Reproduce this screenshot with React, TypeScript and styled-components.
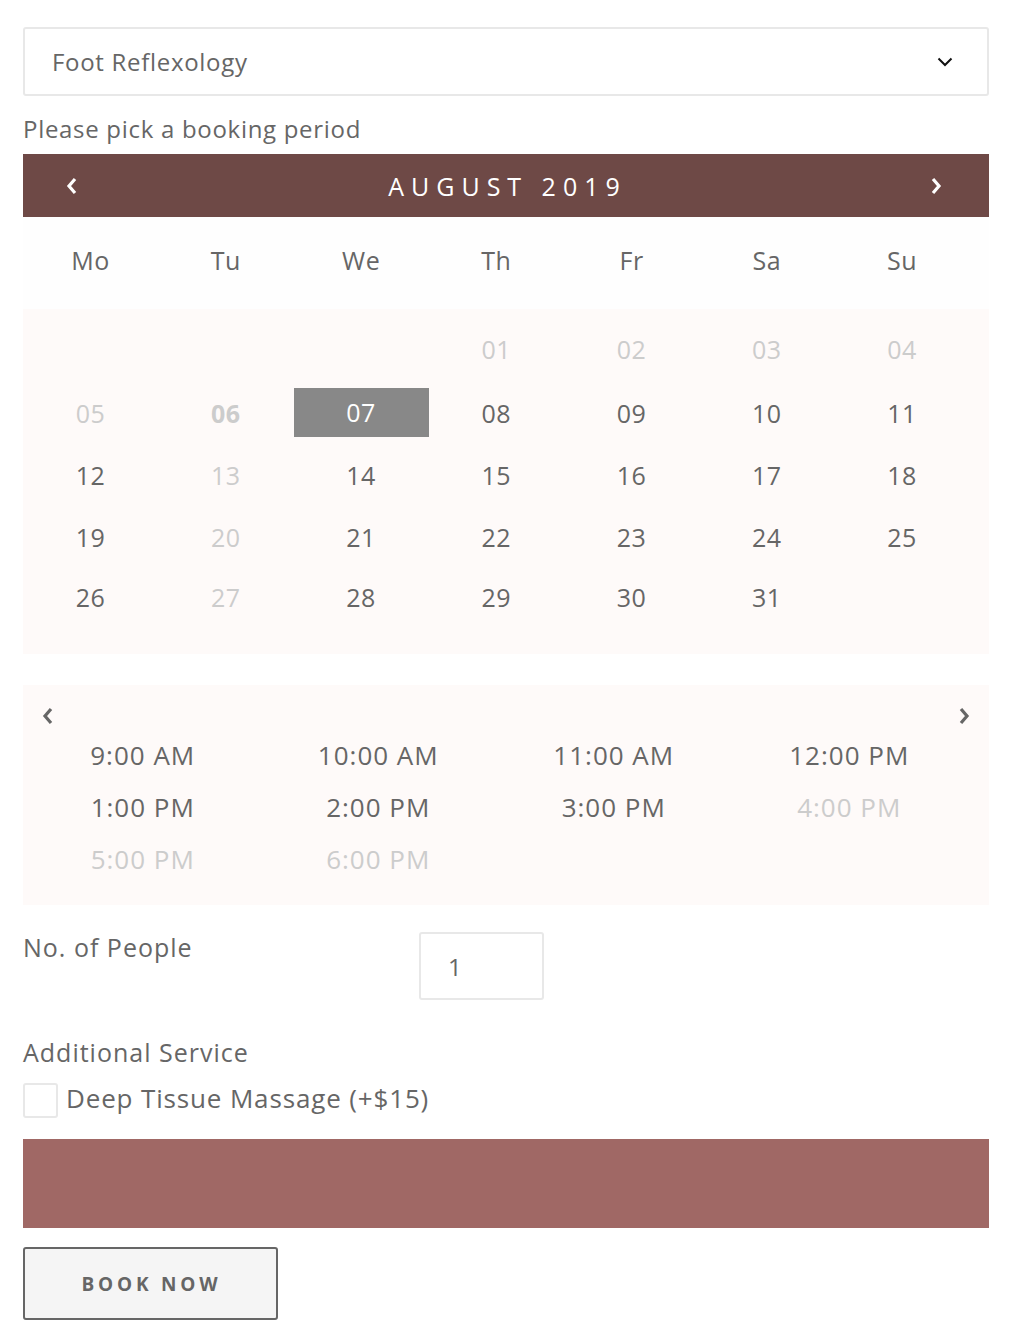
import React from 'react'
import styled, { createGlobalStyle } from 'styled-components'

const GlobalStyle = createGlobalStyle`
  body {
    margin: 0;
    background: #fff;
    font-family: "Open Sans", "Noto Sans", sans-serif;
    color: #666;
  }
`

const Page = styled.div`
  width: 966px;
  padding: 27px 20px 20px 23px;
  box-sizing: content-box;
`

const Select = styled.div`
  height: 69px;
  box-sizing: border-box;
  border: 2px solid #e8e8e8;
  border-radius: 3px;
  display: flex;
  align-items: center;
  justify-content: space-between;
  padding: 0 34px 0 27px;
  font-size: 24px;
  letter-spacing: 0.7px;
  color: #666;
`

const Hint = styled.div`
  font-size: 24px;
  letter-spacing: 0.7px;
  line-height: 30px;
  margin: 18px 0 10px;
  color: #666;
`

const MonthBar = styled.div`
  height: 63px;
  background: #6e4946;
  display: flex;
  align-items: center;
  justify-content: space-between;
  padding: 0 47px 0 43px;
  color: #fff;
`

const MonthTitle = styled.div`
  font-size: 25px;
  letter-spacing: 7px;
  padding-left: 7px;
`

const Arrow = styled.button<{ $light?: boolean }>`
  border: 0;
  background: none;
  padding: 0;
  width: 11px;
  height: 18px;
  display: flex;
  color: ${(p) => (p.$light ? '#fff' : '#666')};
`

const Week = styled.div`
  display: grid;
  grid-template-columns: repeat(7, 135.25px);
  height: 92px;
  align-items: center;
  background: #fefefe;
  padding-bottom: 6px;
  box-sizing: border-box;
`

const WeekDay = styled.div`
  text-align: center;
  font-size: 25px;
  letter-spacing: 0.5px;
  color: #666;
`

const Days = styled.div`
  display: grid;
  grid-template-columns: repeat(7, 135.25px);
  grid-template-rows: 66px 62px 62px 61px 60px;
  padding: 6px 0 28px;
  background: #fefaf9;
`

const Day = styled.div<{ $muted?: boolean; $today?: boolean; $selected?: boolean }>`
  align-self: center;
  height: 49px;
  display: flex;
  align-items: center;
  justify-content: center;
  font-size: 25px;
  letter-spacing: 0.5px;
  font-weight: ${(p) => (p.$today ? 700 : 400)};
  color: ${(p) => (p.$selected ? '#fff' : p.$muted ? '#ccc' : '#666')};
  background: ${(p) => (p.$selected ? '#888' : 'transparent')};
  padding-top: ${(p) => (p.$selected ? '0' : '2px')};
  box-sizing: border-box;
`

const Slots = styled.div`
  margin-top: 31px;
  background: #fefaf9;
  padding: 22px 19px 18px 19px;
  height: 220px;
  box-sizing: border-box;
`

const SlotNav = styled.div`
  display: flex;
  justify-content: space-between;
  height: 20px;
`

const SlotGrid = styled.div`
  display: grid;
  grid-template-columns: repeat(4, 235.5px);
  grid-auto-rows: 52px;
  margin: 2px 0 0 -17px;
`

const Slot = styled.div<{ $off?: boolean }>`
  display: flex;
  align-items: center;
  justify-content: center;
  font-size: 26px;
  letter-spacing: 1px;
  color: ${(p) => (p.$off ? '#ccc' : '#666')};
`

const PeopleRow = styled.div`
  display: flex;
  align-items: flex-start;
  margin-top: 27px;
`

const FieldLabel = styled.div`
  font-size: 25px;
  letter-spacing: 1px;
  line-height: 30px;
  color: #666;
`

const PeopleLabel = styled(FieldLabel)`
  width: 396px;
`

const NumberBox = styled.div`
  width: 125px;
  height: 68px;
  box-sizing: border-box;
  border: 2px solid #e8e8e8;
  border-radius: 3px;
  display: flex;
  align-items: center;
  padding-left: 27px;
  font-size: 24px;
  color: #666;
`

const ServiceTitle = styled(FieldLabel)`
  margin-top: 37px;
`

const CheckRow = styled.label`
  display: flex;
  align-items: center;
  gap: 8px;
  margin-top: 16px;
  font-size: 26px;
  letter-spacing: 0.85px;
  line-height: 30px;
  color: #666;
`

const CheckBox = styled.span`
  width: 35px;
  height: 35px;
  flex: none;
  box-sizing: border-box;
  border: 2px solid #e8e8e8;
  border-radius: 3px;
  background: #fff;
`

const CheckText = styled.span`
  margin-top: -5px;
`

const Banner = styled.div`
  height: 89px;
  background: #a06865;
  margin-top: 21px;
`

const BookButton = styled.button`
  margin-top: 19px;
  width: 255px;
  height: 73px;
  border: 2px solid #666;
  border-radius: 3px;
  background: #f5f5f5;
  font-family: "Open Sans", "Noto Sans", sans-serif;
  font-size: 19px;
  font-weight: 700;
  letter-spacing: 3.8px;
  color: #666;
  padding-left: 8px;
`

const Chevron = ({ dir }: { dir: 'left' | 'right' }) => (
  <svg width="11" height="18" viewBox="0 0 11 18" fill="none">
    <polyline
      points={dir === 'left' ? '9,2 3,9 9,16' : '2,2 8,9 2,16'}
      stroke="currentColor"
      strokeWidth="3.2"
    />
  </svg>
)

const weekDays = ['Mo', 'Tu', 'We', 'Th', 'Fr', 'Sa', 'Su']

interface DayCell {
  label: string
  muted?: boolean
  today?: boolean
  selected?: boolean
}

const days: Array<DayCell | null> = [
  null, null, null,
  { label: '01', muted: true },
  { label: '02', muted: true },
  { label: '03', muted: true },
  { label: '04', muted: true },
  { label: '05', muted: true },
  { label: '06', muted: true, today: true },
  { label: '07', selected: true },
  ...['08', '09', '10', '11', '12'].map((label) => ({ label })),
  { label: '13', muted: true },
  ...['14', '15', '16', '17', '18', '19'].map((label) => ({ label })),
  { label: '20', muted: true },
  ...['21', '22', '23', '24', '25', '26'].map((label) => ({ label })),
  { label: '27', muted: true },
  ...['28', '29', '30', '31'].map((label) => ({ label })),
]

const slots = [
  { time: '9:00 AM' },
  { time: '10:00 AM' },
  { time: '11:00 AM' },
  { time: '12:00 PM' },
  { time: '1:00 PM' },
  { time: '2:00 PM' },
  { time: '3:00 PM' },
  { time: '4:00 PM', off: true },
  { time: '5:00 PM', off: true },
  { time: '6:00 PM', off: true },
]

const App = () => {
  return <>
    <GlobalStyle />
    <Page>
      <Select>
        Foot Reflexology
        <svg width="16" height="10" viewBox="0 0 16 10" fill="none">
          <polyline points="1.5,1.5 8,8 14.5,1.5" stroke="#111" strokeWidth="2" />
        </svg>
      </Select>
      <Hint>Please pick a booking period</Hint>
      <MonthBar>
        <Arrow $light aria-label="previous month"><Chevron dir="left" /></Arrow>
        <MonthTitle>AUGUST 2019</MonthTitle>
        <Arrow $light aria-label="next month"><Chevron dir="right" /></Arrow>
      </MonthBar>
      <Week>
        {weekDays.map((d) => <WeekDay key={d}>{d}</WeekDay>)}
      </Week>
      <Days>
        {days.map((d, i) => d
          ? <Day key={i} $muted={d.muted} $today={d.today} $selected={d.selected}>{d.label}</Day>
          : <span key={i} />)}
      </Days>
      <Slots>
        <SlotNav>
          <Arrow aria-label="previous slots"><Chevron dir="left" /></Arrow>
          <Arrow aria-label="next slots"><Chevron dir="right" /></Arrow>
        </SlotNav>
        <SlotGrid>
          {slots.map((s) => <Slot key={s.time} $off={s.off}>{s.time}</Slot>)}
        </SlotGrid>
      </Slots>
      <PeopleRow>
        <PeopleLabel>No. of People</PeopleLabel>
        <NumberBox>1</NumberBox>
      </PeopleRow>
      <ServiceTitle>Additional Service</ServiceTitle>
      <CheckRow>
        <CheckBox />
        <CheckText>Deep Tissue Massage (+$15)</CheckText>
      </CheckRow>
      <Banner />
      <BookButton>BOOK NOW</BookButton>
    </Page>
  </>
}

export default App
